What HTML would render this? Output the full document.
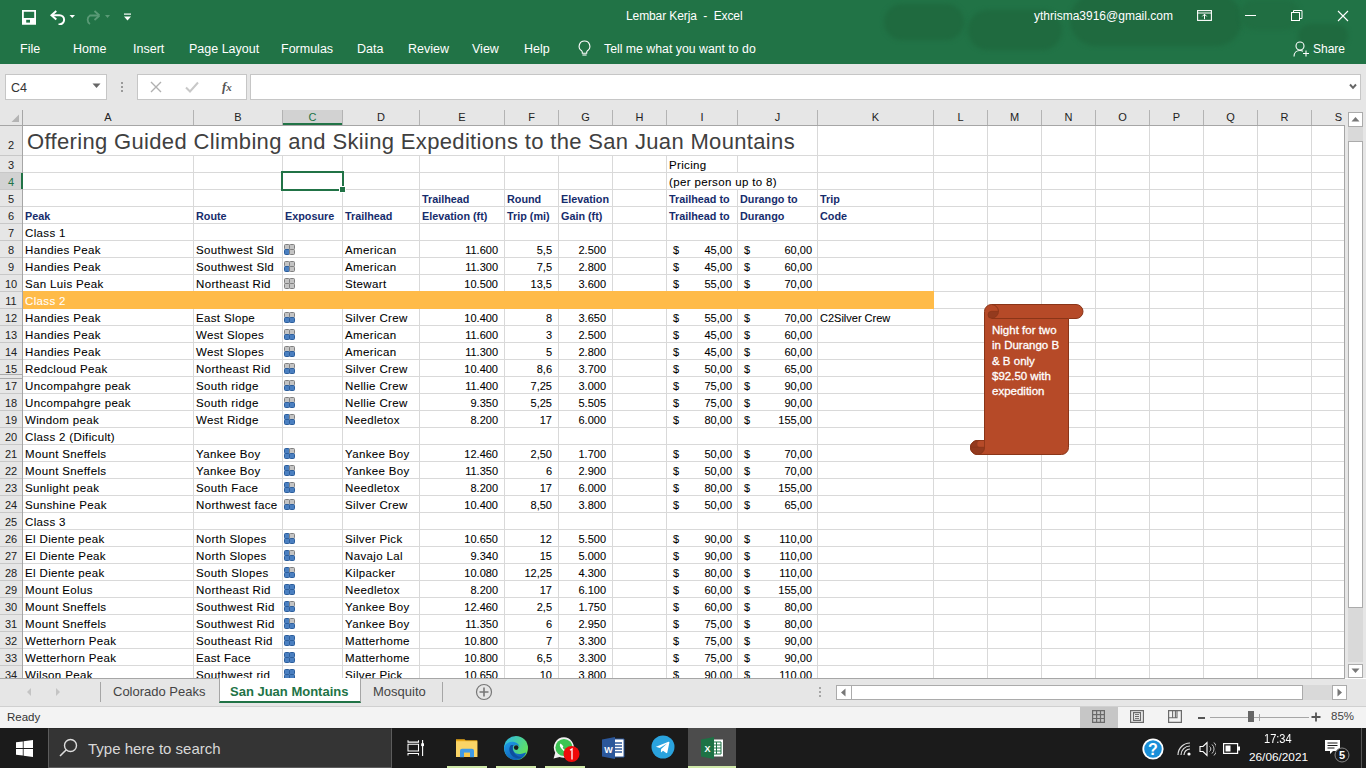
<!DOCTYPE html>
<html><head><meta charset="utf-8">
<style>
*{margin:0;padding:0;box-sizing:border-box}
html,body{width:1366px;height:768px;overflow:hidden;background:#fff;font-family:"Liberation Sans",sans-serif}
.abs{position:absolute}
#top{position:absolute;left:0;top:0;width:1366px;height:64px;background:#217346;overflow:hidden}
.wt{position:absolute;color:#fff;white-space:nowrap}
#fbar{position:absolute;left:0;top:64px;width:1366px;height:46px;background:#e6e6e6}
.box{position:absolute;background:#fff;border:1px solid #c6c6c6}
#grid{position:absolute;left:0;top:0;width:1366px;height:768px}
.hl{position:absolute;left:23px;width:1321px;height:1px;background:#d9d9d9}
.vl{position:absolute;width:1px;background:#d9d9d9}
.t,.b,.n{position:absolute;height:16px;line-height:16px;font-size:11.5px;letter-spacing:.35px;color:#000;white-space:nowrap;-webkit-text-stroke:0.08px currentColor}
.n{font-size:11px;letter-spacing:0}
.b{font-weight:bold;color:#162c6c;font-size:10.8px;letter-spacing:0;-webkit-text-stroke:0}
.ic{position:absolute;width:11px;height:11px}
.ic i{position:absolute;width:6px;height:6px;border-radius:1.5px}
.qg{background:#c4c4c4;border:1px solid #808080}
.qb{background:#4a7fc0;border:1px solid #2c5e9c}
.ch{position:absolute;top:110px;height:15px;line-height:15px;text-align:center;font-size:11px;color:#222;background:#e6e6e6}
.ch.sel{background:#d2d2d2;color:#217346;border-bottom:2px solid #217346;line-height:14px}
.chd{position:absolute;top:110px;width:1px;height:15px;background:#b3b3b3}
.rh{position:absolute;left:0;width:22px;text-align:center;font-size:11px;color:#222;background:#e6e6e6}
.rh.sel{background:#d2d2d2;color:#217346}
.rhd{position:absolute;left:0;width:22px;height:1px;background:#c8c8c8}
</style></head><body>
<!-- title / ribbon -->
<div id="top">
  <div class="abs" style="left:884px;top:4px;width:80px;height:36px;border-radius:20px;background:#1f6a3f;filter:blur(2px)"></div>
  <div class="abs" style="left:968px;top:10px;width:94px;height:40px;border-radius:22px;background:#1f6a3f;filter:blur(2px)"></div>
  <div class="abs" style="left:1070px;top:-6px;width:172px;height:52px;border-radius:26px;background:#1f6a3f;filter:blur(2px)"></div>
  <div class="abs" style="left:1240px;top:0px;width:60px;height:30px;border-radius:15px;background:#206e42;filter:blur(2px)"></div>
  <div class="abs" style="left:1298px;top:24px;width:50px;height:24px;border-radius:12px;background:#1f6a3f;filter:blur(2px)"></div>
  <!-- save icon -->
  <svg class="abs" style="left:21px;top:9px" width="16" height="16" viewBox="0 0 16 16">
    <path d="M1.9 1.9h12.2v12.7H1.9z" fill="none" stroke="#fff" stroke-width="1.8"/>
    <rect x="1" y="9" width="14" height="6.5" fill="#fff"/>
    <rect x="5.2" y="10.8" width="3.8" height="2.8" fill="#217346"/>
  </svg>
  <!-- undo -->
  <svg class="abs" style="left:49px;top:9px" width="30" height="16" viewBox="0 0 30 16">
    <path d="M3.5 6.2h7a4.6 4.6 0 0 1 0 9.2h-1" fill="none" stroke="#fff" stroke-width="2"/>
    <path d="M7.3 2L2.5 6.2l4.8 4.2" fill="none" stroke="#fff" stroke-width="2"/>
    <path d="M20.5 6h5.5l-2.75 3z" fill="#fff"/>
  </svg>
  <!-- redo (disabled) -->
  <svg class="abs" style="left:84px;top:9px" width="30" height="16" viewBox="0 0 30 16">
    <path d="M14 6.5H6a5 5 0 0 0 0 8.5" fill="none" stroke="#5a9a76" stroke-width="1.8"/>
    <path d="M15.5 6.5L10.5 2M15.5 6.5L10.5 11" fill="none" stroke="#5a9a76" stroke-width="1.8"/>
    <path d="M21 6h5l-2.5 3z" fill="#5a9a76"/>
  </svg>
  <!-- customize -->
  <svg class="abs" style="left:123px;top:13px" width="9" height="9" viewBox="0 0 9 9">
    <rect x="1" y="0.5" width="7" height="1.2" fill="#fff"/>
    <path d="M1 3.5h7L4.5 7.5z" fill="#fff"/>
  </svg>
  <div class="wt" style="left:626px;top:9px;font-size:12px;letter-spacing:-0.1px">Lembar Kerja&nbsp; -&nbsp; Excel</div>
  <div class="wt" style="left:1034px;top:9px;font-size:12px">ythrisma3916@gmail.com</div>
  <!-- ribbon display options -->
  <svg class="abs" style="left:1197px;top:10px" width="15" height="11" viewBox="0 0 15 11">
    <rect x="0.6" y="0.6" width="13.8" height="9.8" fill="none" stroke="#fff" stroke-width="1.1"/>
    <line x1="0.6" y1="3" x2="14.4" y2="3" stroke="#fff" stroke-width="1"/>
    <path d="M7.5 4.2v5M5.3 6.4l2.2-2.2 2.2 2.2" fill="none" stroke="#fff" stroke-width="1"/>
  </svg>
  <div class="abs" style="left:1245px;top:15px;width:11px;height:1px;background:#fff"></div>
  <svg class="abs" style="left:1291px;top:10px" width="12" height="11" viewBox="0 0 12 11">
    <rect x="0.5" y="2.5" width="8" height="8" fill="none" stroke="#fff" stroke-width="1"/>
    <path d="M2.5 2.5V0.5h8.5v8h-2" fill="none" stroke="#fff" stroke-width="1"/>
  </svg>
  <svg class="abs" style="left:1337px;top:10px" width="12" height="12" viewBox="0 0 12 12">
    <path d="M1 1L11 11M11 1L1 11" stroke="#fff" stroke-width="1.1"/>
  </svg>
  <!-- tabs -->
  <div class="wt" style="left:20px;top:42px;font-size:12.5px">File</div>
  <div class="wt" style="left:73px;top:42px;font-size:12.5px">Home</div>
  <div class="wt" style="left:133px;top:42px;font-size:12.5px">Insert</div>
  <div class="wt" style="left:189px;top:42px;font-size:12.5px">Page Layout</div>
  <div class="wt" style="left:281px;top:42px;font-size:12.5px">Formulas</div>
  <div class="wt" style="left:357px;top:42px;font-size:12.5px">Data</div>
  <div class="wt" style="left:408px;top:42px;font-size:12.5px">Review</div>
  <div class="wt" style="left:472px;top:42px;font-size:12.5px">View</div>
  <div class="wt" style="left:524px;top:42px;font-size:12.5px">Help</div>
  <svg class="abs" style="left:577px;top:40px" width="15" height="17" viewBox="0 0 15 17">
    <path d="M7.5 1a5.3 5.3 0 0 0-3 9.7c.6.5.8 1.1.8 1.8v.8h4.4v-.8c0-.7.2-1.3.8-1.8A5.3 5.3 0 0 0 7.5 1z" fill="none" stroke="#fff" stroke-width="1.1"/>
    <path d="M5.4 15h4.2" stroke="#fff" stroke-width="1.1"/>
  </svg>
  <div class="wt" style="left:604px;top:42px;font-size:12.3px">Tell me what you want to do</div>
  <svg class="abs" style="left:1293px;top:41px" width="17" height="16" viewBox="0 0 17 16">
    <circle cx="7" cy="5" r="4" fill="none" stroke="#fff" stroke-width="1.1"/>
    <path d="M1 15.5c0-3.5 2.5-6 6-6 1.2 0 2.2.3 3 .8" fill="none" stroke="#fff" stroke-width="1.1"/>
    <path d="M13 9.5v6M10 12.5h6" stroke="#fff" stroke-width="1.1"/>
  </svg>
  <div class="wt" style="left:1313px;top:42px;font-size:12px">Share</div>
</div>

<!-- formula bar area -->
<div id="fbar"></div>
<div class="box" style="left:5px;top:74px;width:102px;height:26px"></div>
<div class="abs" style="left:11px;top:81px;font-size:12.5px;color:#333">C4</div>
<svg class="abs" style="left:92px;top:83px" width="9" height="6" viewBox="0 0 9 6"><path d="M0.5 0.5h8L4.5 5z" fill="#666"/></svg>
<div class="abs" style="left:121px;top:82px;width:2px;height:2px;background:#9a9a9a"></div>
<div class="abs" style="left:121px;top:86px;width:2px;height:2px;background:#9a9a9a"></div>
<div class="abs" style="left:121px;top:90px;width:2px;height:2px;background:#9a9a9a"></div>
<div class="box" style="left:137px;top:74px;width:110px;height:26px"></div>
<svg class="abs" style="left:150px;top:81px" width="12" height="12" viewBox="0 0 12 12"><path d="M1 1L11 11M11 1L1 11" stroke="#b0b0b0" stroke-width="1.4"/></svg>
<svg class="abs" style="left:185px;top:81px" width="14" height="12" viewBox="0 0 14 12"><path d="M1 6.5L5 10.5L13 1.5" fill="none" stroke="#c8c8c8" stroke-width="2"/></svg>
<div class="abs" style="left:222px;top:79px;font-family:'Liberation Serif',serif;font-style:italic;font-weight:bold;font-size:13px;color:#555">f<span style="font-size:11px;letter-spacing:0">x</span></div>
<div class="box" style="left:250px;top:74px;width:1111px;height:26px"></div>
<svg class="abs" style="left:1349px;top:83px" width="8" height="7" viewBox="0 0 8 7"><path d="M1 1.5L4 4.8L7 1.5" fill="none" stroke="#666" stroke-width="2"/></svg>

<!-- column / row header background -->
<div class="abs" style="left:0;top:110px;width:1366px;height:16px;background:#e6e6e6"></div>
<div class="abs" style="left:0;top:126px;width:22px;height:552px;background:#e6e6e6"></div>
<div class="ch" style="left:23px;width:170px">A</div>
<div class="ch" style="left:194px;width:88px">B</div>
<div class="chd" style="left:193px"></div>
<div class="ch sel" style="left:283px;width:59px">C</div>
<div class="chd" style="left:282px"></div>
<div class="ch" style="left:343px;width:76px">D</div>
<div class="chd" style="left:342px"></div>
<div class="ch" style="left:420px;width:84px">E</div>
<div class="chd" style="left:419px"></div>
<div class="ch" style="left:505px;width:53px">F</div>
<div class="chd" style="left:504px"></div>
<div class="ch" style="left:559px;width:53px">G</div>
<div class="chd" style="left:558px"></div>
<div class="ch" style="left:613px;width:53px">H</div>
<div class="chd" style="left:612px"></div>
<div class="ch" style="left:667px;width:70px">I</div>
<div class="chd" style="left:666px"></div>
<div class="ch" style="left:738px;width:79px">J</div>
<div class="chd" style="left:737px"></div>
<div class="ch" style="left:818px;width:115px">K</div>
<div class="chd" style="left:817px"></div>
<div class="ch" style="left:934px;width:53px">L</div>
<div class="chd" style="left:933px"></div>
<div class="ch" style="left:988px;width:53px">M</div>
<div class="chd" style="left:987px"></div>
<div class="ch" style="left:1042px;width:53px">N</div>
<div class="chd" style="left:1041px"></div>
<div class="ch" style="left:1096px;width:53px">O</div>
<div class="chd" style="left:1095px"></div>
<div class="ch" style="left:1150px;width:53px">P</div>
<div class="chd" style="left:1149px"></div>
<div class="ch" style="left:1204px;width:53px">Q</div>
<div class="chd" style="left:1203px"></div>
<div class="ch" style="left:1258px;width:53px">R</div>
<div class="chd" style="left:1257px"></div>
<div class="ch" style="left:1312px;width:53px">S</div>
<div class="chd" style="left:1311px"></div>
<div class="rh" style="top:126px;height:29px;padding-top:10px;line-height:19px">2</div>
<div class="rh" style="top:156px;height:16px;line-height:18px">3</div>
<div class="rh sel" style="top:173px;height:16px;line-height:18px">4</div>
<div class="rh" style="top:190px;height:16px;line-height:18px">5</div>
<div class="rh" style="top:207px;height:16px;line-height:18px">6</div>
<div class="rh" style="top:224px;height:16px;line-height:18px">7</div>
<div class="rh" style="top:241px;height:16px;line-height:18px">8</div>
<div class="rh" style="top:258px;height:16px;line-height:18px">9</div>
<div class="rh" style="top:275px;height:16px;line-height:18px">10</div>
<div class="rh" style="top:292px;height:16px;line-height:18px">11</div>
<div class="rh" style="top:309px;height:16px;line-height:18px">12</div>
<div class="rh" style="top:326px;height:16px;line-height:18px">13</div>
<div class="rh" style="top:343px;height:16px;line-height:18px">14</div>
<div class="rh" style="top:360px;height:16px;line-height:18px">15</div>
<div class="rh" style="top:377px;height:16px;line-height:18px">17</div>
<div class="rh" style="top:394px;height:16px;line-height:18px">18</div>
<div class="rh" style="top:411px;height:16px;line-height:18px">19</div>
<div class="rh" style="top:428px;height:16px;line-height:18px">20</div>
<div class="rh" style="top:445px;height:16px;line-height:18px">21</div>
<div class="rh" style="top:462px;height:16px;line-height:18px">22</div>
<div class="rh" style="top:479px;height:16px;line-height:18px">23</div>
<div class="rh" style="top:496px;height:16px;line-height:18px">24</div>
<div class="rh" style="top:513px;height:16px;line-height:18px">25</div>
<div class="rh" style="top:530px;height:16px;line-height:18px">26</div>
<div class="rh" style="top:547px;height:16px;line-height:18px">27</div>
<div class="rh" style="top:564px;height:16px;line-height:18px">28</div>
<div class="rh" style="top:581px;height:16px;line-height:18px">29</div>
<div class="rh" style="top:598px;height:16px;line-height:18px">30</div>
<div class="rh" style="top:615px;height:16px;line-height:18px">31</div>
<div class="rh" style="top:632px;height:16px;line-height:18px">32</div>
<div class="rh" style="top:649px;height:16px;line-height:18px">33</div>
<div class="rh" style="top:666px;height:16px;line-height:18px">34</div>
<div class="rhd" style="top:155px"></div>
<div class="rhd" style="top:172px"></div>
<div class="rhd" style="top:189px"></div>
<div class="rhd" style="top:206px"></div>
<div class="rhd" style="top:223px"></div>
<div class="rhd" style="top:240px"></div>
<div class="rhd" style="top:257px"></div>
<div class="rhd" style="top:274px"></div>
<div class="rhd" style="top:291px"></div>
<div class="rhd" style="top:308px"></div>
<div class="rhd" style="top:325px"></div>
<div class="rhd" style="top:342px"></div>
<div class="rhd" style="top:359px"></div>
<div class="rhd" style="top:374px;background:#ababab"></div>
<div class="rhd" style="top:378px;background:#ababab"></div>
<div class="rhd" style="top:393px"></div>
<div class="rhd" style="top:410px"></div>
<div class="rhd" style="top:427px"></div>
<div class="rhd" style="top:444px"></div>
<div class="rhd" style="top:461px"></div>
<div class="rhd" style="top:478px"></div>
<div class="rhd" style="top:495px"></div>
<div class="rhd" style="top:512px"></div>
<div class="rhd" style="top:529px"></div>
<div class="rhd" style="top:546px"></div>
<div class="rhd" style="top:563px"></div>
<div class="rhd" style="top:580px"></div>
<div class="rhd" style="top:597px"></div>
<div class="rhd" style="top:614px"></div>
<div class="rhd" style="top:631px"></div>
<div class="rhd" style="top:648px"></div>
<div class="rhd" style="top:665px"></div>
<div class="rhd" style="top:682px"></div>
<div class="abs" style="left:0;top:125px;width:1345px;height:1px;background:#a6a6a6"></div>
<div class="abs" style="left:22px;top:110px;width:1px;height:568px;background:#a6a6a6"></div>
<svg class="abs" style="left:11px;top:114px" width="9" height="9" viewBox="0 0 9 9"><path d="M8 0.5V8H0.5z" fill="#b4b4b4"/></svg>
<!-- row 4 selected right border -->
<div class="abs" style="left:21px;top:173px;width:2px;height:16px;background:#217346"></div>

<!-- grid -->
<div class="abs" style="left:23px;top:126px;width:1321px;height:552px;background:#fff"></div>
<div class="hl" style="top:155px"></div>
<div class="hl" style="top:172px"></div>
<div class="hl" style="top:189px"></div>
<div class="hl" style="top:206px"></div>
<div class="hl" style="top:223px"></div>
<div class="hl" style="top:240px"></div>
<div class="hl" style="top:257px"></div>
<div class="hl" style="top:274px"></div>
<div class="hl" style="top:291px"></div>
<div class="hl" style="top:308px"></div>
<div class="hl" style="top:325px"></div>
<div class="hl" style="top:342px"></div>
<div class="hl" style="top:359px"></div>
<div class="hl" style="top:376px"></div>
<div class="hl" style="top:393px"></div>
<div class="hl" style="top:410px"></div>
<div class="hl" style="top:427px"></div>
<div class="hl" style="top:444px"></div>
<div class="hl" style="top:461px"></div>
<div class="hl" style="top:478px"></div>
<div class="hl" style="top:495px"></div>
<div class="hl" style="top:512px"></div>
<div class="hl" style="top:529px"></div>
<div class="hl" style="top:546px"></div>
<div class="hl" style="top:563px"></div>
<div class="hl" style="top:580px"></div>
<div class="hl" style="top:597px"></div>
<div class="hl" style="top:614px"></div>
<div class="hl" style="top:631px"></div>
<div class="hl" style="top:648px"></div>
<div class="hl" style="top:665px"></div>
<div class="vl" style="left:193px;top:155px;height:523px"></div>
<div class="vl" style="left:282px;top:155px;height:523px"></div>
<div class="vl" style="left:342px;top:155px;height:523px"></div>
<div class="vl" style="left:419px;top:155px;height:523px"></div>
<div class="vl" style="left:504px;top:155px;height:523px"></div>
<div class="vl" style="left:558px;top:155px;height:523px"></div>
<div class="vl" style="left:612px;top:155px;height:523px"></div>
<div class="vl" style="left:666px;top:155px;height:523px"></div>
<div class="vl" style="left:737px;top:155px;height:17px"></div>
<div class="vl" style="left:737px;top:189px;height:489px"></div>
<div class="vl" style="left:817px;top:126px;height:552px"></div>
<div class="vl" style="left:933px;top:126px;height:552px"></div>
<div class="vl" style="left:987px;top:126px;height:552px"></div>
<div class="vl" style="left:1041px;top:126px;height:552px"></div>
<div class="vl" style="left:1095px;top:126px;height:552px"></div>
<div class="vl" style="left:1149px;top:126px;height:552px"></div>
<div class="vl" style="left:1203px;top:126px;height:552px"></div>
<div class="vl" style="left:1257px;top:126px;height:552px"></div>
<div class="vl" style="left:1311px;top:126px;height:552px"></div>
<div style="position:absolute;left:23px;top:291px;width:911px;height:18px;background:#ffbb48"></div>
<div class="t" style="left:669px;top:157px;">Pricing</div>
<div class="t" style="left:669px;top:174px;">(per person up to 8)</div>
<div class="b" style="left:422px;top:191px;">Trailhead</div>
<div class="b" style="left:507px;top:191px;">Round</div>
<div class="b" style="left:561px;top:191px;">Elevation</div>
<div class="b" style="left:669px;top:191px;">Trailhead to</div>
<div class="b" style="left:740px;top:191px;">Durango to</div>
<div class="b" style="left:820px;top:191px;">Trip</div>
<div class="b" style="left:25px;top:208px;">Peak</div>
<div class="b" style="left:196px;top:208px;">Route</div>
<div class="b" style="left:285px;top:208px;">Exposure</div>
<div class="b" style="left:345px;top:208px;">Trailhead</div>
<div class="b" style="left:422px;top:208px;">Elevation (ft)</div>
<div class="b" style="left:507px;top:208px;">Trip (mi)</div>
<div class="b" style="left:561px;top:208px;">Gain (ft)</div>
<div class="b" style="left:669px;top:208px;">Trailhead to</div>
<div class="b" style="left:740px;top:208px;">Durango</div>
<div class="b" style="left:820px;top:208px;">Code</div>
<div class="t" style="left:25px;top:225px;">Class 1</div>
<div class="t" style="left:25px;top:293px;color:#fff">Class 2</div>
<div class="t" style="left:25px;top:429px;">Class 2 (Dificult)</div>
<div class="t" style="left:25px;top:514px;">Class 3</div>
<div class="t" style="left:820px;top:310px;font-size:11px;letter-spacing:0">C2Silver Crew</div>
<div class="t" style="left:25px;top:242px;">Handies Peak</div>
<div class="t" style="left:196px;top:242px;">Southwest Sld</div>
<div class="ic" style="left:284px;top:244px"><i class="qg" style="left:0px;top:0px"></i><i class="qg" style="left:5px;top:0px"></i><i class="qb" style="left:0px;top:5px"></i><i class="qg" style="left:5px;top:5px"></i></div>
<div class="t" style="left:345px;top:242px;">American</div>
<div class="n ra" style="right:868px;top:242px;">11.600</div>
<div class="n ra" style="right:814px;top:242px;">5,5</div>
<div class="n ra" style="right:760px;top:242px;">2.500</div>
<div class="n" style="left:673px;top:242px;">$</div>
<div class="n ra" style="right:634px;top:242px;">45,00</div>
<div class="n" style="left:744px;top:242px;">$</div>
<div class="n ra" style="right:554px;top:242px;">60,00</div>
<div class="t" style="left:25px;top:259px;">Handies Peak</div>
<div class="t" style="left:196px;top:259px;">Southwest Sld</div>
<div class="ic" style="left:284px;top:261px"><i class="qg" style="left:0px;top:0px"></i><i class="qg" style="left:5px;top:0px"></i><i class="qb" style="left:0px;top:5px"></i><i class="qg" style="left:5px;top:5px"></i></div>
<div class="t" style="left:345px;top:259px;">American</div>
<div class="n ra" style="right:868px;top:259px;">11.300</div>
<div class="n ra" style="right:814px;top:259px;">7,5</div>
<div class="n ra" style="right:760px;top:259px;">2.800</div>
<div class="n" style="left:673px;top:259px;">$</div>
<div class="n ra" style="right:634px;top:259px;">45,00</div>
<div class="n" style="left:744px;top:259px;">$</div>
<div class="n ra" style="right:554px;top:259px;">60,00</div>
<div class="t" style="left:25px;top:276px;">San Luis Peak</div>
<div class="t" style="left:196px;top:276px;">Northeast Rid</div>
<div class="ic" style="left:284px;top:278px"><i class="qg" style="left:0px;top:0px"></i><i class="qg" style="left:5px;top:0px"></i><i class="qg" style="left:0px;top:5px"></i><i class="qg" style="left:5px;top:5px"></i></div>
<div class="t" style="left:345px;top:276px;">Stewart</div>
<div class="n ra" style="right:868px;top:276px;">10.500</div>
<div class="n ra" style="right:814px;top:276px;">13,5</div>
<div class="n ra" style="right:760px;top:276px;">3.600</div>
<div class="n" style="left:673px;top:276px;">$</div>
<div class="n ra" style="right:634px;top:276px;">55,00</div>
<div class="n" style="left:744px;top:276px;">$</div>
<div class="n ra" style="right:554px;top:276px;">70,00</div>
<div class="t" style="left:25px;top:310px;">Handies Peak</div>
<div class="t" style="left:196px;top:310px;">East Slope</div>
<div class="ic" style="left:284px;top:312px"><i class="qg" style="left:0px;top:0px"></i><i class="qg" style="left:5px;top:0px"></i><i class="qb" style="left:0px;top:5px"></i><i class="qb" style="left:5px;top:5px"></i></div>
<div class="t" style="left:345px;top:310px;">Silver Crew</div>
<div class="n ra" style="right:868px;top:310px;">10.400</div>
<div class="n ra" style="right:814px;top:310px;">8</div>
<div class="n ra" style="right:760px;top:310px;">3.650</div>
<div class="n" style="left:673px;top:310px;">$</div>
<div class="n ra" style="right:634px;top:310px;">55,00</div>
<div class="n" style="left:744px;top:310px;">$</div>
<div class="n ra" style="right:554px;top:310px;">70,00</div>
<div class="t" style="left:25px;top:327px;">Handies Peak</div>
<div class="t" style="left:196px;top:327px;">West Slopes</div>
<div class="ic" style="left:284px;top:329px"><i class="qg" style="left:0px;top:0px"></i><i class="qg" style="left:5px;top:0px"></i><i class="qb" style="left:0px;top:5px"></i><i class="qb" style="left:5px;top:5px"></i></div>
<div class="t" style="left:345px;top:327px;">American</div>
<div class="n ra" style="right:868px;top:327px;">11.600</div>
<div class="n ra" style="right:814px;top:327px;">3</div>
<div class="n ra" style="right:760px;top:327px;">2.500</div>
<div class="n" style="left:673px;top:327px;">$</div>
<div class="n ra" style="right:634px;top:327px;">45,00</div>
<div class="n" style="left:744px;top:327px;">$</div>
<div class="n ra" style="right:554px;top:327px;">60,00</div>
<div class="t" style="left:25px;top:344px;">Handies Peak</div>
<div class="t" style="left:196px;top:344px;">West Slopes</div>
<div class="ic" style="left:284px;top:346px"><i class="qg" style="left:0px;top:0px"></i><i class="qg" style="left:5px;top:0px"></i><i class="qb" style="left:0px;top:5px"></i><i class="qb" style="left:5px;top:5px"></i></div>
<div class="t" style="left:345px;top:344px;">American</div>
<div class="n ra" style="right:868px;top:344px;">11.300</div>
<div class="n ra" style="right:814px;top:344px;">5</div>
<div class="n ra" style="right:760px;top:344px;">2.800</div>
<div class="n" style="left:673px;top:344px;">$</div>
<div class="n ra" style="right:634px;top:344px;">45,00</div>
<div class="n" style="left:744px;top:344px;">$</div>
<div class="n ra" style="right:554px;top:344px;">60,00</div>
<div class="t" style="left:25px;top:361px;">Redcloud Peak</div>
<div class="t" style="left:196px;top:361px;">Northeast Rid</div>
<div class="ic" style="left:284px;top:363px"><i class="qg" style="left:0px;top:0px"></i><i class="qg" style="left:5px;top:0px"></i><i class="qb" style="left:0px;top:5px"></i><i class="qb" style="left:5px;top:5px"></i></div>
<div class="t" style="left:345px;top:361px;">Silver Crew</div>
<div class="n ra" style="right:868px;top:361px;">10.400</div>
<div class="n ra" style="right:814px;top:361px;">8,6</div>
<div class="n ra" style="right:760px;top:361px;">3.700</div>
<div class="n" style="left:673px;top:361px;">$</div>
<div class="n ra" style="right:634px;top:361px;">50,00</div>
<div class="n" style="left:744px;top:361px;">$</div>
<div class="n ra" style="right:554px;top:361px;">65,00</div>
<div class="t" style="left:25px;top:378px;">Uncompahgre peak</div>
<div class="t" style="left:196px;top:378px;">South ridge</div>
<div class="ic" style="left:284px;top:380px"><i class="qg" style="left:0px;top:0px"></i><i class="qg" style="left:5px;top:0px"></i><i class="qb" style="left:0px;top:5px"></i><i class="qb" style="left:5px;top:5px"></i></div>
<div class="t" style="left:345px;top:378px;">Nellie Crew</div>
<div class="n ra" style="right:868px;top:378px;">11.400</div>
<div class="n ra" style="right:814px;top:378px;">7,25</div>
<div class="n ra" style="right:760px;top:378px;">3.000</div>
<div class="n" style="left:673px;top:378px;">$</div>
<div class="n ra" style="right:634px;top:378px;">75,00</div>
<div class="n" style="left:744px;top:378px;">$</div>
<div class="n ra" style="right:554px;top:378px;">90,00</div>
<div class="t" style="left:25px;top:395px;">Uncompahgre peak</div>
<div class="t" style="left:196px;top:395px;">South ridge</div>
<div class="ic" style="left:284px;top:397px"><i class="qg" style="left:0px;top:0px"></i><i class="qg" style="left:5px;top:0px"></i><i class="qb" style="left:0px;top:5px"></i><i class="qb" style="left:5px;top:5px"></i></div>
<div class="t" style="left:345px;top:395px;">Nellie Crew</div>
<div class="n ra" style="right:868px;top:395px;">9.350</div>
<div class="n ra" style="right:814px;top:395px;">5,25</div>
<div class="n ra" style="right:760px;top:395px;">5.505</div>
<div class="n" style="left:673px;top:395px;">$</div>
<div class="n ra" style="right:634px;top:395px;">75,00</div>
<div class="n" style="left:744px;top:395px;">$</div>
<div class="n ra" style="right:554px;top:395px;">90,00</div>
<div class="t" style="left:25px;top:412px;">Windom peak</div>
<div class="t" style="left:196px;top:412px;">West Ridge</div>
<div class="ic" style="left:284px;top:414px"><i class="qb" style="left:0px;top:0px"></i><i class="qg" style="left:5px;top:0px"></i><i class="qb" style="left:0px;top:5px"></i><i class="qb" style="left:5px;top:5px"></i></div>
<div class="t" style="left:345px;top:412px;">Needletox</div>
<div class="n ra" style="right:868px;top:412px;">8.200</div>
<div class="n ra" style="right:814px;top:412px;">17</div>
<div class="n ra" style="right:760px;top:412px;">6.000</div>
<div class="n" style="left:673px;top:412px;">$</div>
<div class="n ra" style="right:634px;top:412px;">80,00</div>
<div class="n" style="left:744px;top:412px;">$</div>
<div class="n ra" style="right:554px;top:412px;">155,00</div>
<div class="t" style="left:25px;top:446px;">Mount Sneffels</div>
<div class="t" style="left:196px;top:446px;">Yankee Boy</div>
<div class="ic" style="left:284px;top:448px"><i class="qb" style="left:0px;top:0px"></i><i class="qg" style="left:5px;top:0px"></i><i class="qb" style="left:0px;top:5px"></i><i class="qb" style="left:5px;top:5px"></i></div>
<div class="t" style="left:345px;top:446px;">Yankee Boy</div>
<div class="n ra" style="right:868px;top:446px;">12.460</div>
<div class="n ra" style="right:814px;top:446px;">2,50</div>
<div class="n ra" style="right:760px;top:446px;">1.700</div>
<div class="n" style="left:673px;top:446px;">$</div>
<div class="n ra" style="right:634px;top:446px;">50,00</div>
<div class="n" style="left:744px;top:446px;">$</div>
<div class="n ra" style="right:554px;top:446px;">70,00</div>
<div class="t" style="left:25px;top:463px;">Mount Sneffels</div>
<div class="t" style="left:196px;top:463px;">Yankee Boy</div>
<div class="ic" style="left:284px;top:465px"><i class="qb" style="left:0px;top:0px"></i><i class="qg" style="left:5px;top:0px"></i><i class="qb" style="left:0px;top:5px"></i><i class="qb" style="left:5px;top:5px"></i></div>
<div class="t" style="left:345px;top:463px;">Yankee Boy</div>
<div class="n ra" style="right:868px;top:463px;">11.350</div>
<div class="n ra" style="right:814px;top:463px;">6</div>
<div class="n ra" style="right:760px;top:463px;">2.900</div>
<div class="n" style="left:673px;top:463px;">$</div>
<div class="n ra" style="right:634px;top:463px;">50,00</div>
<div class="n" style="left:744px;top:463px;">$</div>
<div class="n ra" style="right:554px;top:463px;">70,00</div>
<div class="t" style="left:25px;top:480px;">Sunlight peak</div>
<div class="t" style="left:196px;top:480px;">South Face</div>
<div class="ic" style="left:284px;top:482px"><i class="qb" style="left:0px;top:0px"></i><i class="qg" style="left:5px;top:0px"></i><i class="qb" style="left:0px;top:5px"></i><i class="qb" style="left:5px;top:5px"></i></div>
<div class="t" style="left:345px;top:480px;">Needletox</div>
<div class="n ra" style="right:868px;top:480px;">8.200</div>
<div class="n ra" style="right:814px;top:480px;">17</div>
<div class="n ra" style="right:760px;top:480px;">6.000</div>
<div class="n" style="left:673px;top:480px;">$</div>
<div class="n ra" style="right:634px;top:480px;">80,00</div>
<div class="n" style="left:744px;top:480px;">$</div>
<div class="n ra" style="right:554px;top:480px;">155,00</div>
<div class="t" style="left:25px;top:497px;">Sunshine Peak</div>
<div class="t" style="left:196px;top:497px;">Northwest face</div>
<div class="ic" style="left:284px;top:499px"><i class="qg" style="left:0px;top:0px"></i><i class="qg" style="left:5px;top:0px"></i><i class="qb" style="left:0px;top:5px"></i><i class="qb" style="left:5px;top:5px"></i></div>
<div class="t" style="left:345px;top:497px;">Silver Crew</div>
<div class="n ra" style="right:868px;top:497px;">10.400</div>
<div class="n ra" style="right:814px;top:497px;">8,50</div>
<div class="n ra" style="right:760px;top:497px;">3.800</div>
<div class="n" style="left:673px;top:497px;">$</div>
<div class="n ra" style="right:634px;top:497px;">50,00</div>
<div class="n" style="left:744px;top:497px;">$</div>
<div class="n ra" style="right:554px;top:497px;">65,00</div>
<div class="t" style="left:25px;top:531px;">El Diente peak</div>
<div class="t" style="left:196px;top:531px;">North Slopes</div>
<div class="ic" style="left:284px;top:533px"><i class="qb" style="left:0px;top:0px"></i><i class="qg" style="left:5px;top:0px"></i><i class="qb" style="left:0px;top:5px"></i><i class="qb" style="left:5px;top:5px"></i></div>
<div class="t" style="left:345px;top:531px;">Silver Pick</div>
<div class="n ra" style="right:868px;top:531px;">10.650</div>
<div class="n ra" style="right:814px;top:531px;">12</div>
<div class="n ra" style="right:760px;top:531px;">5.500</div>
<div class="n" style="left:673px;top:531px;">$</div>
<div class="n ra" style="right:634px;top:531px;">90,00</div>
<div class="n" style="left:744px;top:531px;">$</div>
<div class="n ra" style="right:554px;top:531px;">110,00</div>
<div class="t" style="left:25px;top:548px;">El Diente Peak</div>
<div class="t" style="left:196px;top:548px;">North Slopes</div>
<div class="ic" style="left:284px;top:550px"><i class="qb" style="left:0px;top:0px"></i><i class="qg" style="left:5px;top:0px"></i><i class="qb" style="left:0px;top:5px"></i><i class="qb" style="left:5px;top:5px"></i></div>
<div class="t" style="left:345px;top:548px;">Navajo Lal</div>
<div class="n ra" style="right:868px;top:548px;">9.340</div>
<div class="n ra" style="right:814px;top:548px;">15</div>
<div class="n ra" style="right:760px;top:548px;">5.000</div>
<div class="n" style="left:673px;top:548px;">$</div>
<div class="n ra" style="right:634px;top:548px;">90,00</div>
<div class="n" style="left:744px;top:548px;">$</div>
<div class="n ra" style="right:554px;top:548px;">110,00</div>
<div class="t" style="left:25px;top:565px;">El Diente peak</div>
<div class="t" style="left:196px;top:565px;">South Slopes</div>
<div class="ic" style="left:284px;top:567px"><i class="qb" style="left:0px;top:0px"></i><i class="qg" style="left:5px;top:0px"></i><i class="qb" style="left:0px;top:5px"></i><i class="qb" style="left:5px;top:5px"></i></div>
<div class="t" style="left:345px;top:565px;">Kilpacker</div>
<div class="n ra" style="right:868px;top:565px;">10.080</div>
<div class="n ra" style="right:814px;top:565px;">12,25</div>
<div class="n ra" style="right:760px;top:565px;">4.300</div>
<div class="n" style="left:673px;top:565px;">$</div>
<div class="n ra" style="right:634px;top:565px;">80,00</div>
<div class="n" style="left:744px;top:565px;">$</div>
<div class="n ra" style="right:554px;top:565px;">110,00</div>
<div class="t" style="left:25px;top:582px;">Mount Eolus</div>
<div class="t" style="left:196px;top:582px;">Northeast Rid</div>
<div class="ic" style="left:284px;top:584px"><i class="qb" style="left:0px;top:0px"></i><i class="qb" style="left:5px;top:0px"></i><i class="qb" style="left:0px;top:5px"></i><i class="qb" style="left:5px;top:5px"></i></div>
<div class="t" style="left:345px;top:582px;">Needletox</div>
<div class="n ra" style="right:868px;top:582px;">8.200</div>
<div class="n ra" style="right:814px;top:582px;">17</div>
<div class="n ra" style="right:760px;top:582px;">6.100</div>
<div class="n" style="left:673px;top:582px;">$</div>
<div class="n ra" style="right:634px;top:582px;">60,00</div>
<div class="n" style="left:744px;top:582px;">$</div>
<div class="n ra" style="right:554px;top:582px;">155,00</div>
<div class="t" style="left:25px;top:599px;">Mount Sneffels</div>
<div class="t" style="left:196px;top:599px;">Southwest Rid</div>
<div class="ic" style="left:284px;top:601px"><i class="qb" style="left:0px;top:0px"></i><i class="qg" style="left:5px;top:0px"></i><i class="qb" style="left:0px;top:5px"></i><i class="qb" style="left:5px;top:5px"></i></div>
<div class="t" style="left:345px;top:599px;">Yankee Boy</div>
<div class="n ra" style="right:868px;top:599px;">12.460</div>
<div class="n ra" style="right:814px;top:599px;">2,5</div>
<div class="n ra" style="right:760px;top:599px;">1.750</div>
<div class="n" style="left:673px;top:599px;">$</div>
<div class="n ra" style="right:634px;top:599px;">60,00</div>
<div class="n" style="left:744px;top:599px;">$</div>
<div class="n ra" style="right:554px;top:599px;">80,00</div>
<div class="t" style="left:25px;top:616px;">Mount Sneffels</div>
<div class="t" style="left:196px;top:616px;">Southwest Rid</div>
<div class="ic" style="left:284px;top:618px"><i class="qb" style="left:0px;top:0px"></i><i class="qg" style="left:5px;top:0px"></i><i class="qb" style="left:0px;top:5px"></i><i class="qb" style="left:5px;top:5px"></i></div>
<div class="t" style="left:345px;top:616px;">Yankee Boy</div>
<div class="n ra" style="right:868px;top:616px;">11.350</div>
<div class="n ra" style="right:814px;top:616px;">6</div>
<div class="n ra" style="right:760px;top:616px;">2.950</div>
<div class="n" style="left:673px;top:616px;">$</div>
<div class="n ra" style="right:634px;top:616px;">75,00</div>
<div class="n" style="left:744px;top:616px;">$</div>
<div class="n ra" style="right:554px;top:616px;">80,00</div>
<div class="t" style="left:25px;top:633px;">Wetterhorn Peak</div>
<div class="t" style="left:196px;top:633px;">Southeast Rid</div>
<div class="ic" style="left:284px;top:635px"><i class="qb" style="left:0px;top:0px"></i><i class="qb" style="left:5px;top:0px"></i><i class="qb" style="left:0px;top:5px"></i><i class="qb" style="left:5px;top:5px"></i></div>
<div class="t" style="left:345px;top:633px;">Matterhome</div>
<div class="n ra" style="right:868px;top:633px;">10.800</div>
<div class="n ra" style="right:814px;top:633px;">7</div>
<div class="n ra" style="right:760px;top:633px;">3.300</div>
<div class="n" style="left:673px;top:633px;">$</div>
<div class="n ra" style="right:634px;top:633px;">75,00</div>
<div class="n" style="left:744px;top:633px;">$</div>
<div class="n ra" style="right:554px;top:633px;">90,00</div>
<div class="t" style="left:25px;top:650px;">Wetterhorn Peak</div>
<div class="t" style="left:196px;top:650px;">East Face</div>
<div class="ic" style="left:284px;top:652px"><i class="qb" style="left:0px;top:0px"></i><i class="qb" style="left:5px;top:0px"></i><i class="qb" style="left:0px;top:5px"></i><i class="qb" style="left:5px;top:5px"></i></div>
<div class="t" style="left:345px;top:650px;">Matterhome</div>
<div class="n ra" style="right:868px;top:650px;">10.800</div>
<div class="n ra" style="right:814px;top:650px;">6,5</div>
<div class="n ra" style="right:760px;top:650px;">3.300</div>
<div class="n" style="left:673px;top:650px;">$</div>
<div class="n ra" style="right:634px;top:650px;">75,00</div>
<div class="n" style="left:744px;top:650px;">$</div>
<div class="n ra" style="right:554px;top:650px;">90,00</div>
<div class="t" style="left:25px;top:667px;">Wilson Peak</div>
<div class="t" style="left:196px;top:667px;">Southwest rid</div>
<div class="ic" style="left:284px;top:669px"><i class="qb" style="left:0px;top:0px"></i><i class="qb" style="left:5px;top:0px"></i><i class="qb" style="left:0px;top:5px"></i><i class="qb" style="left:5px;top:5px"></i></div>
<div class="t" style="left:345px;top:667px;">Silver Pick</div>
<div class="n ra" style="right:868px;top:667px;">10.650</div>
<div class="n ra" style="right:814px;top:667px;">10</div>
<div class="n ra" style="right:760px;top:667px;">3.800</div>
<div class="n" style="left:673px;top:667px;">$</div>
<div class="n ra" style="right:634px;top:667px;">90,00</div>
<div class="n" style="left:744px;top:667px;">$</div>
<div class="n ra" style="right:554px;top:667px;">110,00</div>
<!-- title text -->
<div class="abs" style="left:27px;top:130px;font-size:22px;line-height:24px;color:#404040;white-space:nowrap;letter-spacing:0.34px">Offering Guided Climbing and Skiing Expeditions to the San Juan Mountains</div>
<!-- selection C4 -->
<div class="abs" style="left:281px;top:171px;width:63px;height:20px;border:2px solid #217346"></div>
<div class="abs" style="left:339px;top:186px;width:7px;height:7px;background:#217346;border:1px solid #fff"></div>

<!-- grid right/bottom border -->
<div class="abs" style="left:1344px;top:125px;width:1px;height:554px;background:#a6a6a6"></div>
<div class="abs" style="left:0;top:678px;width:1345px;height:1px;background:#a6a6a6"></div>

<!-- scroll shape -->
<svg class="abs" style="left:968px;top:302px" width="118" height="156" viewBox="968 302 118 156">
  <path d="M984.5 311.5a7 7 0 0 1 7-7h84.5a7 7 0 0 1 0 14H1068.5v129a7 7 0 0 1-7 7H977.5a7 7 0 0 1 0-14h7z" fill="#b64a28" stroke="#8a3518" stroke-width="1"/>
  <path d="M991.5 304.5a7 7 0 0 1 7 7" fill="none" stroke="#8a3518" stroke-width="1"/>
  <path d="M991.5 318.5H1068.5" stroke="#8a3518" stroke-width="1"/>
  <path d="M991.5 311.3H998.5A7 7 0 0 1 991.5 318.3A3.5 3.5 0 0 1 991.5 311.3z" fill="#933a1e" stroke="#8a3518" stroke-width="0.8"/>
  <path d="M977.5 440.5h7v7a7 7 0 1 1-7-7z" fill="#933a1e" stroke="#8a3518" stroke-width="1"/>
  <path d="M980.5 440.8h3.7v6.4h-3.7a3.2 3.2 0 0 1 0-6.4z" fill="#b64a28"/>
  <path d="M971 447.3h13.5" stroke="#8a3518" stroke-width="0.8"/>
</svg>
<div class="abs" style="left:992px;top:323px;width:80px;font-size:11.5px;line-height:15.3px;color:#fff;-webkit-text-stroke:0.3px #fff">Night for two<br>in Durango B<br>&amp; B only<br>$92.50 with<br>expedition</div>

<!-- vertical scrollbar -->
<div class="abs" style="left:1345px;top:110px;width:21px;height:568px;background:#e6e6e6"></div>
<div class="box" style="left:1348px;top:112px;width:15px;height:15px;border-color:#ababab"></div>
<svg class="abs" style="left:1351px;top:116px" width="9" height="6" viewBox="0 0 9 6"><path d="M0.5 5.5L4.5 1L8.5 5.5z" fill="#777"/></svg>
<div class="abs" style="left:1348px;top:127px;width:15px;height:535px;background:#d9d9d9"></div>
<div class="box" style="left:1348px;top:141px;width:15px;height:467px;border-color:#ababab"></div>
<div class="box" style="left:1348px;top:664px;width:15px;height:14px;border-color:#ababab"></div>
<svg class="abs" style="left:1351px;top:668px" width="9" height="6" viewBox="0 0 9 6"><path d="M0.5 0.5L4.5 5L8.5 0.5z" fill="#777"/></svg>

<!-- sheet tab bar -->
<div class="abs" style="left:0;top:679px;width:1366px;height:27px;background:#e6e6e6"></div>
<svg class="abs" style="left:26px;top:687px" width="6" height="10" viewBox="0 0 6 10"><path d="M5 1L1 5L5 9z" fill="#c4c4c4"/></svg>
<svg class="abs" style="left:55px;top:687px" width="6" height="10" viewBox="0 0 6 10"><path d="M1 1L5 5L1 9z" fill="#c4c4c4"/></svg>
<div class="abs" style="left:100px;top:682px;width:1px;height:20px;background:#a6a6a6"></div>
<div class="abs" style="left:113px;top:684px;font-size:13px;color:#444;white-space:nowrap">Colorado Peaks</div>
<div class="abs" style="left:219px;top:678px;width:142px;height:25px;background:#fff;border-left:1px solid #a6a6a6;border-right:1px solid #a6a6a6;border-bottom:2px solid #217346"></div>
<div class="abs" style="left:230px;top:684px;font-size:13px;font-weight:bold;color:#217346;white-space:nowrap">San Juan Montains</div>
<div class="abs" style="left:373px;top:684px;font-size:13px;color:#444;white-space:nowrap">Mosquito</div>
<div class="abs" style="left:442px;top:682px;width:1px;height:20px;background:#a6a6a6"></div>
<svg class="abs" style="left:475px;top:683px" width="18" height="18" viewBox="0 0 18 18"><circle cx="9" cy="9" r="7.5" fill="none" stroke="#777" stroke-width="1.2"/><path d="M9 4.5v9M4.5 9h9" stroke="#777" stroke-width="1.6"/></svg>
<!-- horizontal scroll -->
<div class="abs" style="left:819px;top:687px;width:2px;height:2px;background:#a6a6a6"></div>
<div class="abs" style="left:819px;top:691px;width:2px;height:2px;background:#a6a6a6"></div>
<div class="abs" style="left:819px;top:695px;width:2px;height:2px;background:#a6a6a6"></div>
<div class="abs" style="left:836px;top:685px;width:511px;height:15px;background:#d9d9d9"></div>
<div class="box" style="left:836px;top:685px;width:16px;height:15px;border-color:#ababab"></div>
<svg class="abs" style="left:840px;top:688px" width="6" height="9" viewBox="0 0 6 9"><path d="M5.5 0.5L1 4.5L5.5 8.5z" fill="#777"/></svg>
<div class="box" style="left:851px;top:685px;width:452px;height:15px;border-color:#ababab"></div>
<div class="box" style="left:1332px;top:685px;width:15px;height:15px;border-color:#ababab"></div>
<svg class="abs" style="left:1337px;top:688px" width="6" height="9" viewBox="0 0 6 9"><path d="M0.5 0.5L5 4.5L0.5 8.5z" fill="#777"/></svg>

<!-- status bar -->
<div class="abs" style="left:0;top:706px;width:1366px;height:1px;background:#d0d0d0"></div>
<div class="abs" style="left:0;top:707px;width:1366px;height:21px;background:#f3f3f3"></div>
<div class="abs" style="left:7px;top:711px;font-size:11.5px;color:#333">Ready</div>
<div class="abs" style="left:1080px;top:707px;width:38px;height:21px;background:#c6c6c6"></div>
<svg class="abs" style="left:1092px;top:710px" width="13" height="13" viewBox="0 0 13 13"><path d="M0.6 0.6h11.8v11.8H0.6zM0.6 4.6h11.8M0.6 8.5h11.8M4.6 0.6v11.8M8.5 0.6v11.8" fill="none" stroke="#6a6a6a" stroke-width="1.2"/></svg>
<svg class="abs" style="left:1130px;top:710px" width="14" height="13" viewBox="0 0 14 13"><path d="M0.6 0.6h12.8v11.8H0.6z" fill="none" stroke="#6a6a6a" stroke-width="1.2"/><path d="M3.5 2.6h7v7.8h-7z" fill="none" stroke="#6a6a6a" stroke-width="1.2"/><path d="M5 4.6h4M5 6.5h4M5 8.4h4" stroke="#6a6a6a" stroke-width="1"/></svg>
<svg class="abs" style="left:1168px;top:710px" width="14" height="13" viewBox="0 0 14 13"><path d="M0.6 0.6h12.8v11.8H0.6z" fill="none" stroke="#6a6a6a" stroke-width="1.2"/><path d="M0.6 7.7h8.4V0.6M4.6 0.6v7.1M7.4 0.6v7.1" fill="none" stroke="#6a6a6a" stroke-width="1.1"/></svg>
<div class="abs" style="left:1198px;top:717px;width:7px;height:1.6px;background:#555"></div>
<div class="abs" style="left:1210px;top:717px;width:99px;height:1px;background:#a6a6a6"></div>
<div class="abs" style="left:1248px;top:711px;width:6px;height:11px;background:#666"></div>
<div class="abs" style="left:1259px;top:714px;width:1px;height:7px;background:#a6a6a6"></div>
<svg class="abs" style="left:1311px;top:712px" width="10" height="10" viewBox="0 0 10 10"><path d="M5 0.5v9M0.5 5h9" stroke="#555" stroke-width="1.8"/></svg>
<div class="abs" style="left:1331px;top:710px;font-size:11.5px;color:#444">85%</div>

<!-- taskbar -->
<div class="abs" style="left:0;top:728px;width:1366px;height:40px;background:#1b1b1b"></div>
<svg class="abs" style="left:16px;top:740px" width="17" height="17" viewBox="0 0 17 17"><path d="M0 2.3l6.8-.9v6.6H0zM7.6 1.3L17 0v8H7.6zM0 9h6.8v6.6L0 14.7zM7.6 9H17v8l-9.4-1.3z" fill="#fff"/></svg>
<div class="abs" style="left:48px;top:728px;width:344px;height:40px;background:#343434;border:1px solid #5c5c5c;border-top-color:#2b2b2b"></div>
<svg class="abs" style="left:59px;top:738px" width="19" height="19" viewBox="0 0 19 19"><circle cx="11.5" cy="7.5" r="6" fill="none" stroke="#ddd" stroke-width="1.4"/><path d="M7.3 11.7L1 18" stroke="#ddd" stroke-width="1.6"/></svg>
<div class="abs" style="left:88px;top:740px;font-size:15px;color:#d8d8d8;white-space:nowrap">Type here to search</div>
<!-- task view -->
<svg class="abs" style="left:407px;top:739px" width="18" height="18" viewBox="0 0 18 18"><path d="M1 1.2v1.9h10.5V1.2M1 16.6v-2.2h10.5v2.2M1 5.2h10.5v6.8H1z" fill="none" stroke="#fff" stroke-width="1.05"/><path d="M15.6 1v16" stroke="#fff" stroke-width="1.1"/><rect x="14.2" y="4.3" width="2.8" height="2.8" fill="#fff"/></svg>
<!-- file explorer -->
<svg class="abs" style="left:456px;top:738px" width="22" height="20" viewBox="0 0 22 20"><path d="M0 1.2h8.5l1 1H21.3v16.8H0z" fill="#e8a818"/><path d="M0 3.2h21.3v15.8H0z" fill="#fad466"/><path d="M4 19.2v-6.4a2 2 0 0 1 2-2h10a2 2 0 0 1 2 2v6.4h-4v-4.4h-6v4.4z" fill="#3f9ae6"/><path d="M8 14.8h6v4.2H8z" fill="#f6c94e"/></svg>
<div class="abs" style="left:447px;top:766px;width:40px;height:2px;background:#cfe8a8"></div>
<!-- edge -->
<svg class="abs" style="left:504px;top:736px" width="24" height="24" viewBox="0 0 24 24"><defs><linearGradient id="eg1" x1="0" y1="0" x2="1" y2="0.6"><stop offset="0" stop-color="#2ab6ee"/><stop offset="1" stop-color="#62e25a"/></linearGradient><linearGradient id="eg2" x1="0" y1="0" x2="0.6" y2="1"><stop offset="0" stop-color="#1e9de8"/><stop offset="1" stop-color="#0e5cb5"/></linearGradient></defs><circle cx="12" cy="12" r="12" fill="url(#eg1)"/><path d="M0.2 11C1.5 7.5 5 5.5 9 5.8C13 6 15.5 9 15.5 11.5C15 9.5 13 8.5 11.5 8.8C9 9.3 8.2 12 9.2 14.5C10.5 17.5 14 18.5 17.5 17.8C19.5 17.4 21 17 22.3 16.3C20.5 21 16.5 24 12 24C5 24 0 18.5 0.2 11Z" fill="url(#eg2)"/><path d="M7 9C4.5 11 4.5 17 9 20.5C12 22.7 16 22.5 19 21C15 21.5 11 19 9.5 15.5C8.5 13 8.5 10.5 9.5 9Z" fill="#0d4f9f"/><circle cx="12.2" cy="11.6" r="2.3" fill="#1b1b1b"/></svg>
<div class="abs" style="left:496px;top:766px;width:40px;height:2px;background:#cfe8a8"></div>
<!-- whatsapp -->
<svg class="abs" style="left:553px;top:736px" width="30" height="28" viewBox="0 0 30 28"><path d="M11 1.2a10.3 10.3 0 0 0-8.8 15.5L0.6 22.6l6-1.6A10.3 10.3 0 1 0 11 1.2z" fill="#f0f0f0"/><circle cx="11" cy="11.5" r="8.6" fill="#3cc453"/><path d="M7.5 7.5c-.8.8-1 2 0 3.8 1 1.8 2.8 3.6 4.6 4.4 1.7.7 2.8.2 3.3-.6l-1.5-1.3-1.2.7c-1-.4-2.6-1.9-3-3l.7-1.1L9 8.8z" fill="#fff"/><circle cx="18.5" cy="18" r="8" fill="#f00a0a"/><path d="M17 14.3l2-1.3v10.5" fill="none" stroke="#fff" stroke-width="1.3"/></svg>
<div class="abs" style="left:545px;top:766px;width:40px;height:2px;background:#cfe8a8"></div>
<!-- word -->
<svg class="abs" style="left:602px;top:737px" width="23" height="22" viewBox="0 0 23 22"><path d="M9 2h13v18H9z" fill="#fff" stroke="#2b579a" stroke-width="1"/><path d="M12 6h8M12 9h8M12 12h8M12 15h8" stroke="#2b579a" stroke-width="1.3"/><path d="M0 2.5L13 0v22L0 19.5z" fill="#2b579a"/><text x="6.5" y="15.5" text-anchor="middle" font-family="Liberation Sans" font-weight="bold" font-size="9" fill="#fff">W</text></svg>
<!-- telegram -->
<svg class="abs" style="left:651px;top:735px" width="24" height="24" viewBox="0 0 24 24"><circle cx="12" cy="12" r="11.5" fill="#2aa3de"/><path d="M5 11.8l12.5-5c.6-.2 1 .1.9.8l-2.1 10c-.1.6-.6.8-1.1.5l-3.2-2.4-1.6 1.5c-.2.2-.4.2-.5-.1l.2-3.2 6-5.4-7.4 4.6-3.1-1c-.7-.2-.7-.7.1-1z" fill="#fff"/></svg>
<!-- excel active -->
<div class="abs" style="left:688px;top:728px;width:48px;height:40px;background:#4c4c4c"></div>
<div class="abs" style="left:688px;top:766px;width:48px;height:2px;background:#cfe8a8"></div>
<svg class="abs" style="left:701px;top:737px" width="23" height="22" viewBox="0 0 23 22"><path d="M10 2.5h12v17H10z" fill="#fff"/><path d="M12 5h8v12h-8zM12 8h8M12 11h8M12 14h8M15.5 5v12" fill="none" stroke="#1d7245" stroke-width="1"/><path d="M0 2.5L13 0v22L0 19.5z" fill="#1d7245"/><text x="6.5" y="15" text-anchor="middle" font-family="Liberation Sans" font-weight="bold" font-size="9" fill="#fff">X</text></svg>
<!-- tray -->
<svg class="abs" style="left:1142px;top:738px" width="22" height="22" viewBox="0 0 22 22"><circle cx="11" cy="11" r="10.6" fill="#fff"/><circle cx="11" cy="11" r="8.8" fill="#1a8fd8"/><text x="11" y="17" text-anchor="middle" font-family="Liberation Sans" font-weight="bold" font-size="16" fill="#fff">?</text></svg>
<svg class="abs" style="left:1177px;top:742px" width="15" height="14" viewBox="0 0 15 14"><path d="M1 13A12 12 0 0 1 13 1M4 13A9 9 0 0 1 13 4M7 13A6 6 0 0 1 13 7" fill="none" stroke="#ddd" stroke-width="1.2"/><circle cx="12" cy="12" r="1.6" fill="#fff"/></svg>
<svg class="abs" style="left:1199px;top:741px" width="17" height="16" viewBox="0 0 17 16"><path d="M1 5.5h3l4-4v13l-4-4H1z" fill="none" stroke="#fff" stroke-width="1.1"/><path d="M10.5 5.5a3 3 0 0 1 0 5M13 3.5a6 6 0 0 1 0 9M15 1.5a9 9 0 0 1 0 13" fill="none" stroke="#ccc" stroke-width="1"/></svg>
<svg class="abs" style="left:1223px;top:743px" width="17" height="11" viewBox="0 0 17 11"><rect x="0.6" y="0.6" width="14" height="9.8" fill="none" stroke="#fff" stroke-width="1.2"/><rect x="2.5" y="2.5" width="5" height="6" fill="#fff"/><rect x="15" y="3.5" width="2" height="4" fill="#fff"/></svg>
<div class="abs" style="left:1264px;top:732px;font-size:12px;color:#fff;transform:scaleX(0.92);transform-origin:0 0">17:34</div>
<div class="abs" style="left:1249px;top:750px;font-size:11.8px;color:#fff">26/06/2021</div>
<svg class="abs" style="left:1324px;top:739px" width="26" height="24" viewBox="0 0 26 24"><path d="M1 1h15v11H9l-3 3v-3H1z" fill="#fff"/><path d="M3.5 4h10M3.5 6.5h10M3.5 9h7" stroke="#1b1b1b" stroke-width="1"/><circle cx="18" cy="16" r="7" fill="#1b1b1b" stroke="#888" stroke-width="1"/><text x="18" y="20" text-anchor="middle" font-family="Liberation Sans" font-weight="bold" font-size="11" fill="#fff">5</text></svg>
<div class="abs" style="left:1361px;top:728px;width:1px;height:40px;background:#555"></div>
</body></html>
